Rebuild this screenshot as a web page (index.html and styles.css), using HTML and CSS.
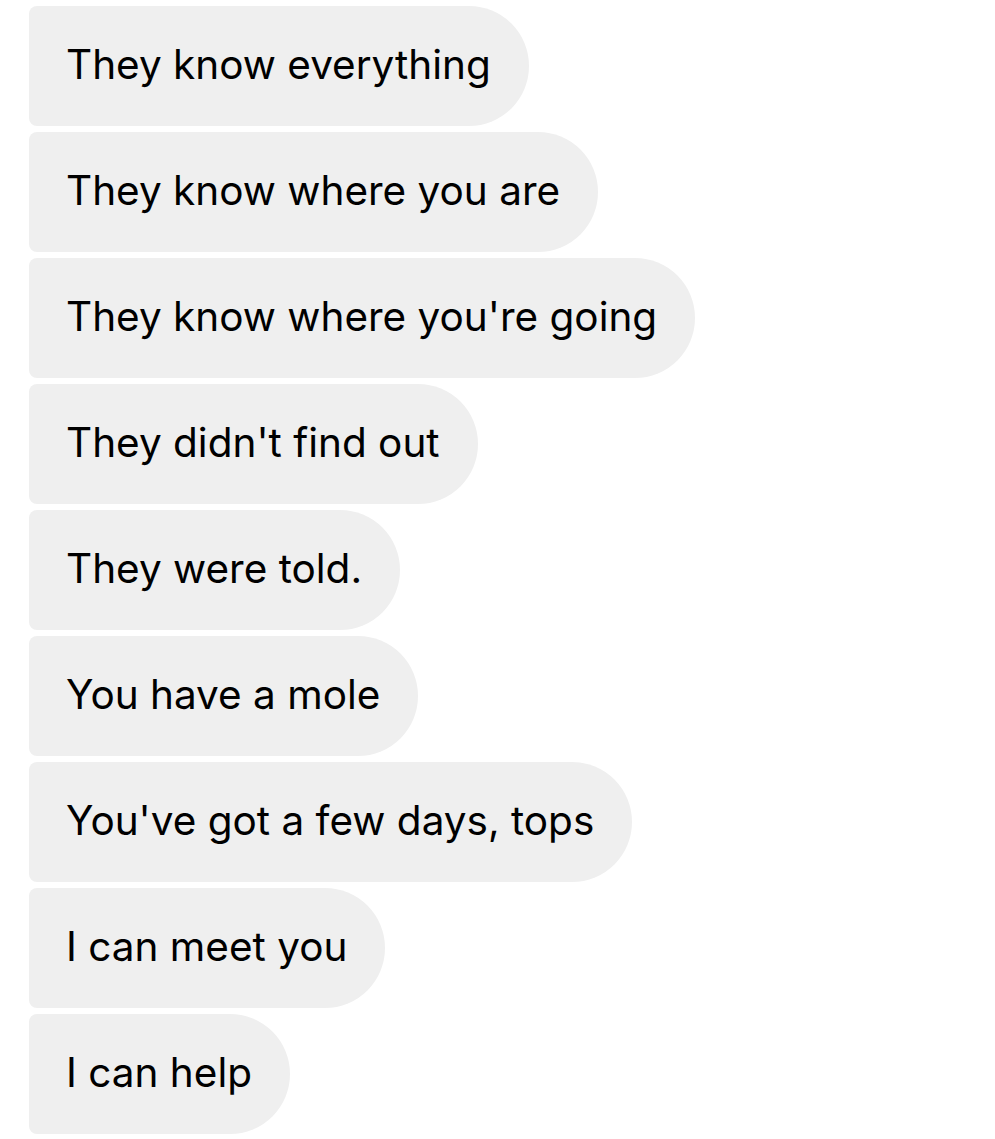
FILE: index.html
```html
<!DOCTYPE HTML>
<html>
<head>
 <title>Messages</title>
 <meta name="viewport" content="width=device-width, initial-scale=1">
 <link rel="stylesheet" href="styles.css">
</head>
<body>
<div class="thread">
  <div class="bubble">They know everything</div>
  <div class="bubble">They know where you are</div>
  <div class="bubble">They know where you're going</div>
  <div class="bubble">They didn't find out</div>
  <div class="bubble">They were told.</div>
  <div class="bubble">You have a mole</div>
  <div class="bubble">You've got a few days, tops</div>
  <div class="bubble">I can meet you</div>
  <div class="bubble">I can help</div>
</div>
</body>
</html>
```

FILE: styles.css
```css
body{
 margin:0;
 background-color:#fff;
 font-family:Inter, "Liberation Sans", sans-serif;
}
.thread{
 display:flex;
 flex-direction:column;
 align-items:flex-start;
 gap:6px;
 padding:6px 0 0 29px;
}
.bubble{
 height:120px;
 line-height:118px;
 padding:0 38px 0 37px;
 font-size:40.5px;
 color:#000;
 background-color:#efefef;
 border-radius:8px 60px 60px 8px;
 white-space:nowrap;
}
```
